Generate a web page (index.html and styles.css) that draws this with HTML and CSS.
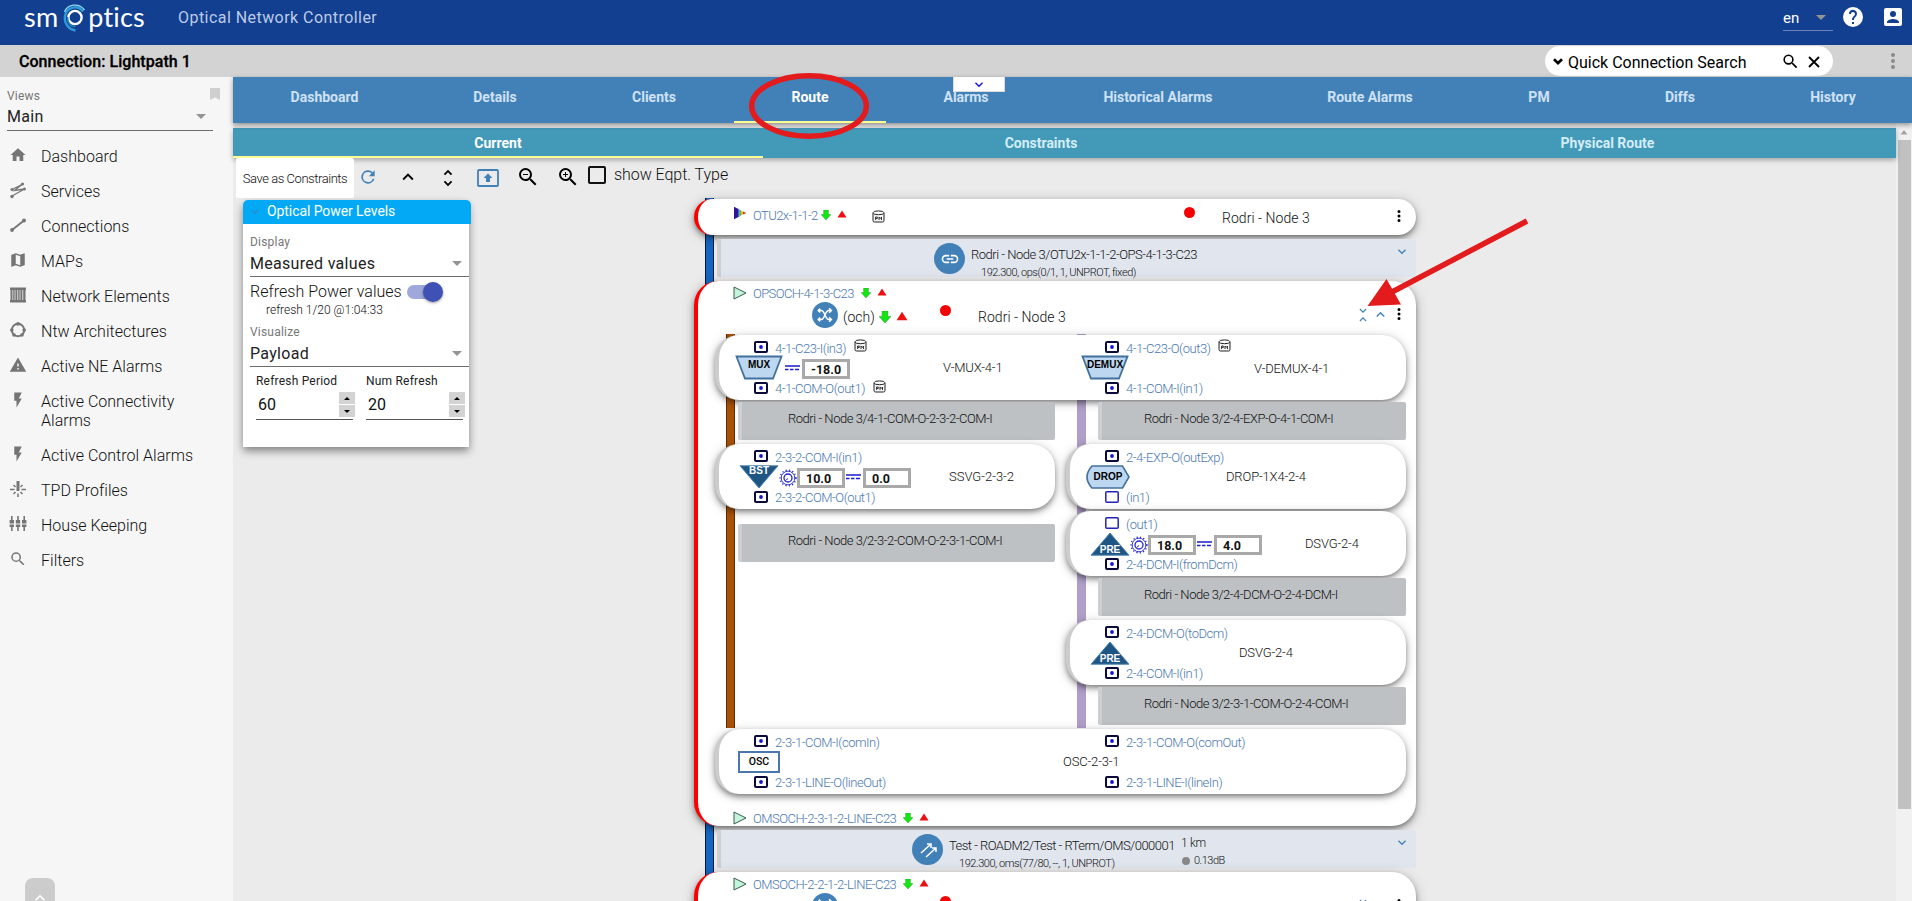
FILE: index.html
```html
<!DOCTYPE html>
<html lang="en">
<head>
<meta charset="utf-8">
<title>Optical Network Controller</title>
<link rel="stylesheet" href="styles.css">
</head>
<body>
<svg class="defs" width="0" height="0">
  <symbol id="more" viewBox="0 0 24 24"><path d="M12 8a2 2 0 1 0 0-4 2 2 0 0 0 0 4zm0 2a2 2 0 1 0 0 4 2 2 0 0 0 0-4zm0 6a2 2 0 1 0 0 4 2 2 0 0 0 0-4z"/></symbol>
  <symbol id="down" viewBox="0 0 24 24"><path d="M7.41 7.84 12 12.42l4.59-4.58L18 9.25l-6 6-6-6z"/></symbol>
  <symbol id="up" viewBox="0 0 24 24"><path d="M7.41 15.41 12 10.83l4.59 4.58L18 14l-6-6-6 6z"/></symbol>
  <symbol id="search" viewBox="0 0 24 24"><path d="M15.5 14h-.79l-.28-.27A6.47 6.47 0 0 0 16 9.5 6.5 6.5 0 1 0 9.5 16c1.61 0 3.09-.59 4.23-1.57l.27.28v.79l5 4.99L20.49 19l-4.99-5zm-6 0a4.5 4.5 0 1 1 0-9 4.5 4.5 0 0 1 0 9z"/></symbol>
  <symbol id="bolt" viewBox="0 0 24 24"><path d="M7 2v11h3v9l7-12h-4l4-8z"/></symbol>
  <symbol id="port" viewBox="0 0 14 12"><rect x="1" y="1" width="12" height="10" rx="1" fill="#fff" stroke="#0a0a3c" stroke-width="2"/><circle cx="7" cy="6" r="1.9" fill="#1414d8"/></symbol>
  <symbol id="port-open" viewBox="0 0 14 12"><rect x=".8" y=".8" width="12.4" height="10.4" rx="1" fill="#fff" stroke="#2323b4" stroke-width="1.5"/></symbol>
  <symbol id="green" viewBox="0 0 10 10"><path d="M2.6 0h4.8v4.5H10L5 10 0 4.500h2.600z" fill="#14e614" stroke="#2b8a2b" stroke-width=".4"/></symbol>
  <symbol id="red" viewBox="0 0 10 8"><path d="M5 .5 9.500 7.500h-9z" fill="#ee1010"/></symbol>
  <symbol id="tri" viewBox="0 0 14 14"><path d="M1 1v12l12-6z" fill="#c2f5dc" stroke="#3b5c4c" stroke-width="1"/></symbol>
  <symbol id="pm" viewBox="0 0 13 13"><path d="M1 3v7.500q0 1.500 1.500 1.500h8q1.500 0 1.500-1.500V3" fill="#f4f4f4" stroke="#222"/><ellipse cx="6.500" cy="2.800" rx="5.500" ry="1.900" fill="#fff" stroke="#222"/><path d="M3.600 10V7h1.700v1.500H3.600M7 10V7l1.200 1.500L9.500 7v3" fill="none" stroke="#222" stroke-width=".9"/></symbol>
  <symbol id="dash" viewBox="0 0 15 6"><path d="M0 1h15M0 4.500h3.500m1.500 0h3.500m1.500 0h4" stroke="#1c1cd0" stroke-width="1.500"/></symbol>
  <symbol id="gear" viewBox="0 0 18 18"><g fill="none" stroke="#2424cf"><circle cx="9" cy="9" r="6.800" stroke-width=".9"/><circle cx="9" cy="9" r="7.900" stroke-width="1.400" stroke-dasharray="1.200 2.250"/><circle cx="9" cy="9" r="4" stroke-width="1.300"/><path d="M6.500 11.500 9 9.500"/></g></symbol>
  <symbol id="mux" viewBox="0 0 48 25"><path d="M1.500 1.500h45l-8.500 22h-28z" fill="#bdd7f0" stroke="#41719c" stroke-width="1.800"/></symbol>
  <symbol id="bst" viewBox="0 0 40 24"><path d="M1 .8h38L20 23z" fill="#1f5583" stroke="#4e86b5"/></symbol>
  <symbol id="pre" viewBox="0 0 40 24"><path d="M20 1 39 23.200H1z" fill="#1f5583" stroke="#4e86b5"/></symbol>
  <symbol id="drop" viewBox="0 0 44 24"><path d="M6 1h30.500L43 12l-6.500 11H6Q-4 12 6 1z" fill="#bdd7f0" stroke="#41719c" stroke-width="1.600"/></symbol>
  <symbol id="shuffle" viewBox="0 0 24 24"><path d="M3 6h4c5 0 5 12 10 12h3M3 18h4c5 0 5-12 10-12h3M17.500 3l3 3-3 3M17.500 15l3 3-3 3M5.500 3.500 3 6l2.500 2.500M5.500 15.500 3 18l2.500 2.500" fill="none" stroke="#fff" stroke-width="2"/></symbol>
</svg>

<header class="topbar">
  <div class="logo"><span>sm</span><svg width="30" height="30" viewBox="0 0 30 30" fill="none"><circle cx="17" cy="14.500" r="6.600" stroke="#fff" stroke-width="2.400"/><path d="M25 8.500C20 1.500 8.500 3.500 7 13c-1 8 4 13.500 10.500 14.500" stroke="#2f9bd6" stroke-width="2.400"/><path d="M26.500 7C21-.5 9.500 1 6.500 9" stroke="#8fd8f2" stroke-width="1.300"/><path d="M9.500 14c0 6 3 9.500 8 9.500" stroke="#1f7fc4" stroke-width="1.600"/></svg><span>ptics</span></div>
  <div class="product">Optical Network Controller</div>
  <div class="lang"><span>en</span><i class="caret"></i></div>
  <svg class="help" width="24" height="24" viewBox="0 0 24 24" fill="#fff"><path d="M12 2a10 10 0 1 0 0 20 10 10 0 0 0 0-20zm1 17h-2v-2h2v2zm2.070-7.750-.9.920C13.450 12.900 13 13.500 13 15h-2v-.5c0-1.100.450-2.100 1.170-2.830l1.240-1.260A2 2 0 1 0 10 9H8a4 4 0 1 1 7.070 2.250z"/></svg>
  <svg width="24" height="24" viewBox="0 0 24 24" fill="#fff"><path d="M3 5v14a2 2 0 0 0 2 2h14a2 2 0 0 0 2-2V5a2 2 0 0 0-2-2H5a2 2 0 0 0-2 2zm12 4a3 3 0 1 1-6 0 3 3 0 0 1 6 0zm-9 8c0-2 4-3.100 6-3.100s6 1.100 6 3.100v1H6z"/></svg>
</header>

<div class="titlebar">
  <h1>Connection: Lightpath 1</h1>
  <div class="quick">
    <svg class="bold" width="16" height="16"><use href="#down"/></svg>
    <span>Quick Connection Search</span>
    <svg class="qs" width="19" height="19"><use href="#search"/></svg>
    <svg width="12" height="12" viewBox="0 0 12 12"><path d="M1 1l10 10M11 1 1 11" stroke="#000" stroke-width="1.800"/></svg>
  </div>
  <svg class="menu" width="24" height="24"><use href="#more"/></svg>
</div>

<div class="shell">
  <nav class="side">
    <div class="views"><span>Views</span><svg width="10" height="12" viewBox="0 0 10 12"><path d="M0 0h10v12L5 9.500 0 12z" fill="#cfcfcf"/></svg></div>
    <div class="select viewsel"><span>Main</span><i class="caret"></i></div>
    <ul>
      <li><svg width="18" height="18" viewBox="0 0 24 24"><path d="M10 20v-6h4v6h5v-8h3L12 3 2 12h3v8z"/></svg>Dashboard</li>
      <li><svg width="18" height="18" viewBox="0 0 18 18"><g fill="none" stroke="#757575" stroke-width="1.300"><path d="M3 8.500 13 3.500M13 3.500 5.500 9.500 15.500 8M15.500 8 3 15"/></g><circle cx="3" cy="8.500" r="1.500"/><circle cx="13.500" cy="3" r="1.600"/><circle cx="15.500" cy="8" r="1.500"/><circle cx="3" cy="15.500" r="1.700"/></svg>Services</li>
      <li><svg width="18" height="18" viewBox="0 0 18 18"><path d="M3 14 15 4.500" stroke="#757575" stroke-width="1.800"/><circle cx="3" cy="14" r="1.900"/><circle cx="15" cy="4.500" r="1.900"/></svg>Connections</li>
      <li><svg width="18" height="18" viewBox="0 0 24 24"><path d="m20.500 3-.16.030L15 5.100 9 3 3.360 4.900A.5.5 0 0 0 3 5.380V20.500c0 .3.220.5.500.5l.16-.030L9 18.900l6 2.100 5.640-1.900a.5.5 0 0 0 .36-.480V3.500a.5.5 0 0 0-.5-.5zM15 19l-6-2.110V5l6 2.110z"/></svg>MAPs</li>
      <li><svg width="18" height="18" viewBox="0 0 18 18"><path d="M1 1.500h16V4H1zM1 14h16v2.500H1zM1.500 4h2v10h-2zM4.200 4h1.500v10H4.200zM6.400 4h2v10h-2zM9.200 4h1.500v10H9.200zM11.400 4h2v10h-2zM14.200 4h2.300v10h-2.300z"/></svg>Network Elements</li>
      <li><svg width="18" height="18" viewBox="0 0 18 18"><circle cx="9" cy="9" r="6.200" fill="none" stroke="#757575" stroke-width="1.900"/><circle cx="9" cy="2.800" r="1.900"/><circle cx="15.200" cy="9" r="1.800"/><circle cx="2.800" cy="9" r="1.800"/><circle cx="5" cy="14" r="1.800"/><circle cx="13" cy="14" r="1.800"/></svg>Ntw Architectures</li>
      <li><svg width="18" height="18" viewBox="0 0 24 24"><path d="M1 21h22L12 2zm12-3h-2v-2h2zm0-4h-2v-4h2z"/></svg>Active NE Alarms</li>
      <li class="two"><svg width="18" height="18"><use href="#bolt"/></svg>Active Connectivity Alarms</li>
      <li><svg width="18" height="18"><use href="#bolt"/></svg>Active Control Alarms</li>
      <li><svg width="18" height="18" viewBox="0 0 18 18"><g fill="none" stroke="#757575" stroke-width="1.500"><path d="M1 9.500h4.500M12.500 9.500H17M9 13.500V17M4.500 5 6.500 7M13.500 5l-2 2M4.500 14l2-2M13.500 14l-2-2"/><path d="M9 1v10" stroke-width="3"/></g></svg>TPD Profiles</li>
      <li><svg width="18" height="18" viewBox="0 0 18 18"><path d="M2 1h1.600v4H5v7H3.600v4H2v-4H.6V5H2zM8.200 1h1.600v4h1.400v7H9.800v4H8.200v-4H6.800V5h1.400zM14.400 1H16v4h1.400v7H16v4h-1.600v-4H13V5h1.400z"/><path d="M0 9h18" stroke="#f6f6f6" stroke-width="1"/></svg>House Keeping</li>
      <li><svg width="18" height="18"><use href="#search"/></svg>Filters</li>
    </ul>
    <div class="totop"><svg width="20" height="20"><use href="#up"/></svg></div>
  </nav>

  <main>
    <div class="tabs">
      <span class="t1">Dashboard</span><span class="t2">Details</span><span class="t3">Clients</span><span class="t4 on">Route</span><span class="t5">Alarms</span><span class="t6">Historical Alarms</span><span class="t7">Route Alarms</span><span class="t8">PM</span><span class="t9">Diffs</span><span class="t10">History</span>
      <div class="pull"><svg width="16" height="16"><use href="#down"/></svg></div>
    </div>
    <div class="pane">
      <div class="content">
        <div class="subtabs"><span class="s1 on">Current</span><span class="s2">Constraints</span><span class="s3">Physical Route</span></div>
        <div class="work">
          <div class="left">
            <div class="tools">
              <button>Save as Constraints</button>
              <svg class="i-ref" width="20" height="20" viewBox="0 0 24 24" fill="#4281b8"><path d="M17.650 6.350A8 8 0 1 0 19.730 14h-2.080A6 6 0 1 1 12 6c1.660 0 3.140.69 4.220 1.780L13 11h7V4z"/></svg>
              <svg class="i-up" width="22" height="22"><use href="#up"/></svg>
              <svg class="i-unf" width="22" height="22" viewBox="0 0 24 24"><path d="M12 5.830 15.170 9l1.410-1.410L12 3 7.410 7.590 8.830 9zm0 12.340L8.830 15l-1.410 1.410L12 21l4.590-4.590L15.170 15z"/></svg>
              <svg class="i-box" width="22" height="18" viewBox="0 0 22 18"><rect x="1" y="1" width="20" height="16" rx="1" fill="none" stroke="#4281b8" stroke-width="1.800"/><path d="M11 4.500 15.500 9H13v4H9V9H6.500z" fill="#4281b8"/></svg>
              <svg class="i-zo" width="24" height="24" viewBox="0 0 24 24"><use href="#search"/><path d="M7 9h5v1H7z"/></svg>
              <svg class="i-zi" width="24" height="24" viewBox="0 0 24 24"><use href="#search"/><path d="M7 9h5v1H7zM9 7h1v5H9z"/></svg>
              <i class="check"></i><span class="eqpt">show Eqpt. Type</span>
            </div>
            <section class="panel">
              <h2><svg width="16" height="16"><use href="#down"/></svg>Optical Power Levels</h2>
              <div class="pbody">
                <label>Display</label>
                <div class="select"><span>Measured values</span><i class="caret"></i></div>
                <div class="toggle"><span>Refresh Power values</span><i class="track"><b></b></i></div>
                <div class="note">refresh 1/20 @1:04:33</div>
                <label class="vis">Visualize</label>
                <div class="select"><span>Payload</span><i class="caret"></i></div>
                <div class="nums">
                  <div><label>Refresh Period</label><div class="num"><span>60</span><i class="spin"><b></b><b class="dn"></b></i></div></div>
                  <div><label>Num Refresh</label><div class="num"><span>20</span><i class="spin"><b></b><b class="dn"></b></i></div></div>
                </div>
              </div>
            </section>
          </div>

          <div class="route">
            <div class="node short">
              <div class="tp first"><svg width="14" height="14" viewBox="0 0 14 14"><path d="M1 .8v12.400l4-2V2.800z" fill="#33159c"/><path d="M5 2.800v8.400l1.500-.8V3.600z" fill="#2a78d0"/><path d="M6.500 3.600v6.800L8 9.600V4.400z" fill="#58b848"/><path d="M8 4.400v5.200l2-1V5.400z" fill="#e6c229"/><path d="M10 5.400v3.200L13.300 7z" fill="#d8321e"/></svg><span class="otu">OTU2x-1-1-2</span><svg width="10" height="10"><use href="#green"/></svg><svg class="r" width="10" height="8"><use href="#red"/></svg><svg class="pmi" width="13" height="13"><use href="#pm"/></svg></div>
              <i class="dot"></i><span class="nname">Rodri - Node 3</span>
              <svg class="mv" width="18" height="18"><use href="#more"/></svg>
            </div>
            <div class="link l1">
              <i class="round"><svg width="20" height="20" viewBox="0 0 24 24" fill="#fff"><path d="M3.900 12A3.100 3.100 0 0 1 7 8.900h4V7H7a5 5 0 0 0 0 10h4v-1.900H7A3.100 3.100 0 0 1 3.900 12zM8 13h8v-2H8zm9-6h-4v1.900h4a3.100 3.100 0 0 1 0 6.200h-4V17h4a5 5 0 0 0 0-10z"/></svg></i>
              <div class="ltext"><p>Rodri - Node 3/OTU2x-1-1-2-OPS-4-1-3-C23</p><small>192.300, ops(0/1, 1, UNPROT, fixed)</small></div>
              <svg class="ch" width="16" height="16"><use href="#down"/></svg>
            </div>

            <div class="node big">
              <div class="tp"><svg width="14" height="14"><use href="#tri"/></svg><span class="och">OPSOCH-4-1-3-C23</span><svg width="10" height="10"><use href="#green"/></svg><svg class="r" width="10" height="8"><use href="#red"/></svg></div>
              <div class="nhead"><i class="round sm"><svg width="18" height="18"><use href="#shuffle"/></svg></i><span class="ochl">(och)</span><svg width="12" height="12"><use href="#green"/></svg><svg class="r2" width="12" height="10"><use href="#red"/></svg><i class="dot"></i><span class="nname">Rodri - Node 3</span>
                <svg class="fold" width="14" height="16" viewBox="0 0 24 24"><path d="M7.410 1 6 2.400 12 8.400 18 2.400 16.600 1 12 5.600zM16.600 23 18 21.600l-6-6-6 6L7.400 23 12 18.400z"/></svg>
                <svg class="fu" width="17" height="17"><use href="#up"/></svg>
                <svg class="mv" width="18" height="18"><use href="#more"/></svg></div>

              <div class="grid">
                <div class="dev wide">
                  <div class="half">
                    <div class="port"><svg width="14" height="12"><use href="#port"/></svg><span>4-1-C23-I(in3)</span><svg width="13" height="13"><use href="#pm"/></svg></div>
                    <div class="mid"><i class="sym"><svg width="48" height="25"><use href="#mux"/></svg><b>MUX</b></i><svg class="da" width="15" height="6"><use href="#dash"/></svg><span class="val">-18.0</span><span class="name n-mux">V-MUX-4-1</span></div>
                    <div class="port"><svg width="14" height="12"><use href="#port"/></svg><span>4-1-COM-O(out1)</span><svg width="13" height="13"><use href="#pm"/></svg></div>
                  </div>
                  <div class="half">
                    <div class="port"><svg width="14" height="12"><use href="#port"/></svg><span>4-1-C23-O(out3)</span><svg width="13" height="13"><use href="#pm"/></svg></div>
                    <div class="mid de"><i class="sym"><svg width="48" height="25"><use href="#mux"/></svg><b>DEMUX</b></i><span class="name n-demux">V-DEMUX-4-1</span></div>
                    <div class="port"><svg width="14" height="12"><use href="#port"/></svg><span>4-1-COM-I(in1)</span></div>
                  </div>
                </div>

                <div class="col">
                  <div class="conn">Rodri - Node 3/4-1-COM-O-2-3-2-COM-I</div>
                  <div class="dev"><div class="half">
                    <div class="port"><svg width="14" height="12"><use href="#port"/></svg><span>2-3-2-COM-I(in1)</span></div>
                    <div class="mid amp"><i class="sym up light"><svg width="40" height="24"><use href="#bst"/></svg><b>BST</b></i><svg class="ge" width="18" height="18"><use href="#gear"/></svg><span class="val">10.0</span><svg class="da" width="15" height="6"><use href="#dash"/></svg><span class="val">0.0</span><span class="name n-ssvg">SSVG-2-3-2</span></div>
                    <div class="port"><svg width="14" height="12"><use href="#port"/></svg><span>2-3-2-COM-O(out1)</span></div>
                  </div></div>
                  <div class="conn later">Rodri - Node 3/2-3-2-COM-O-2-3-1-COM-I</div>
                </div>

                <div class="col right">
                  <div class="conn">Rodri - Node 3/2-4-EXP-O-4-1-COM-I</div>
                  <div class="dev"><div class="half">
                    <div class="port"><svg width="14" height="12"><use href="#port"/></svg><span>2-4-EXP-O(outExp)</span></div>
                    <div class="mid"><i class="sym dr"><svg width="44" height="24"><use href="#drop"/></svg><b>DROP</b></i><span class="name n-drop">DROP-1X4-2-4</span></div>
                    <div class="port"><svg width="14" height="12"><use href="#port-open"/></svg><span>(in1)</span></div>
                  </div></div>
                  <div class="dev near"><div class="half">
                    <div class="port"><svg width="14" height="12"><use href="#port-open"/></svg><span>(out1)</span></div>
                    <div class="mid amp"><i class="sym low light"><svg width="40" height="24"><use href="#pre"/></svg><b>PRE</b></i><svg class="ge" width="18" height="18"><use href="#gear"/></svg><span class="val">18.0</span><svg class="da" width="15" height="6"><use href="#dash"/></svg><span class="val">4.0</span><span class="name n-dsvg">DSVG-2-4</span></div>
                    <div class="port"><svg width="14" height="12"><use href="#port"/></svg><span>2-4-DCM-I(fromDcm)</span></div>
                  </div></div>
                  <div class="conn">Rodri - Node 3/2-4-DCM-O-2-4-DCM-I</div>
                  <div class="dev"><div class="half">
                    <div class="port"><svg width="14" height="12"><use href="#port"/></svg><span>2-4-DCM-O(toDcm)</span></div>
                    <div class="mid amp"><i class="sym low light"><svg width="40" height="24"><use href="#pre"/></svg><b>PRE</b></i><span class="name n-pre">DSVG-2-4</span></div>
                    <div class="port"><svg width="14" height="12"><use href="#port"/></svg><span>2-4-COM-I(in1)</span></div>
                  </div></div>
                  <div class="conn">Rodri - Node 3/2-3-1-COM-O-2-4-COM-I</div>
                </div>

                <div class="dev wide last">
                  <div class="half">
                    <div class="port"><svg width="14" height="12"><use href="#port"/></svg><span>2-3-1-COM-I(comIn)</span></div>
                    <div class="mid"><i class="osc">OSC</i><span class="name n-osc">OSC-2-3-1</span></div>
                    <div class="port"><svg width="14" height="12"><use href="#port"/></svg><span>2-3-1-LINE-O(lineOut)</span></div>
                  </div>
                  <div class="half">
                    <div class="port"><svg width="14" height="12"><use href="#port"/></svg><span>2-3-1-COM-O(comOut)</span></div>
                    <div class="mid"></div>
                    <div class="port"><svg width="14" height="12"><use href="#port"/></svg><span>2-3-1-LINE-I(lineIn)</span></div>
                  </div>
                </div>
              </div>
              <div class="tp foot"><svg width="14" height="14"><use href="#tri"/></svg><span class="oms">OMSOCH-2-3-1-2-LINE-C23</span><svg width="10" height="10"><use href="#green"/></svg><svg class="r" width="10" height="8"><use href="#red"/></svg></div>
            </div>

            <div class="link l2">
              <i class="round"><svg width="20" height="20" viewBox="0 0 20 20" fill="none" stroke="#fff" stroke-width="1.500"><path d="M3 13 13 4M9 4h4v4M8 17 18 8M14 8h4v4"/></svg></i>
              <div class="ltext"><p>Test - ROADM2/Test - RTerm/OMS/000001</p><small>192.300, oms(77/80, --, 1, UNPROT)</small></div>
              <div class="loss"><span>1 km</span><span class="db"><i></i>0.13dB</span></div>
              <svg class="ch" width="16" height="16"><use href="#down"/></svg>
            </div>

            <div class="node big">
              <div class="tp"><svg width="14" height="14"><use href="#tri"/></svg><span class="oms">OMSOCH-2-2-1-2-LINE-C23</span><svg width="10" height="10"><use href="#green"/></svg><svg class="r" width="10" height="8"><use href="#red"/></svg></div>
              <div class="nhead"><i class="round sm"><svg width="18" height="18"><use href="#shuffle"/></svg></i><span class="ochl"></span><svg width="12" height="12"><use href="#green"/></svg><svg class="r2" width="12" height="10"><use href="#red"/></svg><i class="dot"></i><span class="nname"></span>
                <svg class="fold" width="14" height="16" viewBox="0 0 24 24"><path d="M7.410 1 6 2.400 12 8.400 18 2.400 16.600 1 12 5.600zM16.600 23 18 21.600l-6-6-6 6L7.400 23 12 18.400z"/></svg>
                <svg class="fu" width="17" height="17"><use href="#up"/></svg>
                <svg class="mv" width="18" height="18"><use href="#more"/></svg></div>
            </div>
          </div>
        </div>
      </div>
      <div class="scroll"><svg width="16" height="17" viewBox="0 0 16 17"><path d="M4.500 11.500h7L8 7z" fill="#a3a3a3"/></svg><i></i></div>
    </div>
  </main>
</div>

<svg class="marks" width="1912" height="901" viewBox="0 0 1912 901">
  <ellipse cx="809" cy="106" rx="57.300" ry="30.200" fill="none" stroke="#e31b1d" stroke-width="5.500"/>
  <path d="M1527 221 1392 292" stroke="#e31b1d" stroke-width="5.500"/>
  <path d="M1367.500 306 1386.500 279 1401 304.500z" fill="#e31b1d"/>
</svg>
</body>
</html>
```

FILE: styles.css
```css
* { box-sizing: border-box; }
html, body { margin: 0; height: 901px; overflow: hidden; }
body { font-family: Roboto, "Liberation Sans", sans-serif; font-size: 16px; font-weight: 300; color: #111; background: #ebebeb; display: flex; flex-direction: column; }
h1, h2, p, ul { margin: 0; padding: 0; font-weight: inherit; }
i, small { font-style: normal; }
svg { flex: none; display: block; }
span, p, small, label, li { white-space: nowrap; }
.defs { position: absolute; }

.topbar { flex: none; height: 45px; background: #123f90; display: flex; align-items: flex-start; padding: 5px 7px 0 24px; }
.logo { display: flex; width: 154px; height: 28px; color: #fff; font: 400 27px/24px Lato, sans-serif; letter-spacing: .2px; }
.logo svg { margin: -2px 0 0 0; }
.product { flex: 1; font-weight: 400; color: #bccbe8; line-height: 26px; letter-spacing: .45px; }
.lang { width: 50px; height: 26px; border-bottom: 1px solid #7084b8; display: flex; align-items: center; justify-content: space-between; padding-right: 7px; color: #fff; font-weight: 400; font-size: 15px; margin-right: 8px; }
.help { margin-right: 16px; }
.caret { border: 5px solid transparent; border-top-color: #949494; border-bottom: 0; }

.titlebar { flex: none; height: 32px; background: #d3d3d3; display: flex; align-items: center; padding: 0 7px 0 19px; }
.titlebar h1 { flex: 1; font-size: 16px; font-weight: 500; color: #000; line-height: 32px; padding-top: 1px; -webkit-text-stroke: .3px #000; letter-spacing: .05px; }
.quick { width: 288px; height: 30px; border-radius: 15px; background: #fff; display: flex; align-items: center; padding: 1px 13px 0 5px; color: #000; font-weight: 400; }
.quick span { width: 214px; margin-left: 2px; padding-top: 1px; }
.quick .qs { margin-right: 8px; }
.bold { stroke: #000; stroke-width: 2; }
.menu { margin-left: 48px; fill: #8a8a8a; }

.shell { flex: 1; display: flex; min-height: 0; }
.side { width: 233px; background: #f6f6f6; padding-left: 7px; position: relative; }
.views { display: flex; justify-content: space-between; padding: 11px 13px 0 0; height: 31px; font-size: 12px; line-height: 17px; color: #777; font-weight: 400; letter-spacing: .2px; }
.select { display: flex; align-items: center; justify-content: space-between; height: 26px; border-bottom: 1px solid #6c6c6c; padding-right: 7px; letter-spacing: .3px; color: #222; font-weight: 400; }
.viewsel { width: 206px; height: 23px; padding-bottom: 5px; }
.side ul { list-style: none; padding-top: 8px; }
.side li { height: 35px; line-height: 19px; padding: 8px 20px 8px 34px; letter-spacing: .02px; position: relative; }
.side li svg { position: absolute; left: 2px; top: 7px; fill: #757575; }
.side .two { height: 54px; white-space: normal; }
.totop { position: absolute; left: 25px; bottom: -7px; width: 30px; height: 30px; border-radius: 8px; background: #ccc; display: flex; justify-content: center; padding-top: 10px; fill: #fff; }

main { width: 1679px; display: flex; flex-direction: column; }
.tabs { flex: none; height: 46px; background: #4281b8; display: flex; position: relative; z-index: 2; box-shadow: 0 2px 5px rgba(0,0,0,.4); }
.tabs span, .subtabs span { text-align: center; font-size: 14px; font-weight: 700; color: #cfe2f4; }
.tabs span { line-height: 40px; height: 46px; }
.tabs .on, .subtabs .on { color: #fff; border-bottom: 2px solid #fdfd96; }
.t1 { width: 183px; } .t2 { width: 158px; } .t3 { width: 160px; } .t4 { width: 152px; } .t5 { width: 160px; }
.t6 { width: 224px; } .t7 { width: 200px; } .t8 { width: 138px; } .t9 { width: 144px; } .t10 { width: 160px; padding-left: 2px; }
.pull { position: absolute; left: 720px; top: 0; width: 52px; height: 15px; background: #fff; display: flex; justify-content: center; border: 1px solid #ddd; border-top: 0; fill: #1414c8; }
.pane { flex: 1; display: flex; min-height: 0; background: #ebebeb; }
.content { width: 1663px; padding-top: 5px; }
.subtabs { height: 30px; display: flex; background: #4399b8; box-shadow: 0 2px 5px rgba(0,0,0,.3); position: relative; }
.subtabs span { line-height: 31px; color: #d3edf7; }
.s1 { width: 530px; } .s2 { width: 556px; } .s3 { width: 577px; }
.scroll { width: 16px; background: #f1f1f1; }
.scroll i { display: block; width: 13px; height: 669px; margin-left: 2px; background: #c1c1c1; }

.work { display: flex; height: 743px; overflow: hidden; }
.left { width: 461px; padding-left: 3px; position: relative; }
.tools { display: flex; align-items: flex-start; height: 42px; width: 520px; position: relative; }
.tools button { width: 118px; height: 40px; border: 0; border-radius: 2px; background: #fff; padding: 0; font: 300 13px Roboto, sans-serif; color: #111; letter-spacing: -.45px; white-space: nowrap; }
.i-ref { margin: 9px 0 0 4px; } .i-up { margin: 8px 0 0 19px; } .i-unf { margin: 9px 0 0 18px; } .i-box { margin: 11px 0 0 18px; }
.i-zo { margin: 7px 0 0 17px; } .i-zi { margin: 7px 0 0 16px; }
.check { width: 18px; height: 18px; border: 2px solid #111; border-radius: 2px; margin: 8px 8px 0 8px; flex: none; }
.eqpt { line-height: 34px; letter-spacing: -.05px; }

.panel { margin-left: 7px; width: 226px; height: 247px; background: #fff; box-shadow: 0 4px 9px rgba(0,0,0,.45); border-radius: 6px 6px 0 0; }
.panel h2 { width: 228px; height: 24px; background: #03a9f4; border-radius: 5px 5px 0 0; color: #fff; font-size: 14px; font-weight: 400; line-height: 23px; display: flex; letter-spacing: -.08px; }
.panel h2 svg { margin: 4px 4px 0; fill: #258fc9; }
.pbody { padding: 9px 0 0 7px; }
.pbody label { display: block; font-size: 12px; line-height: 18px; color: #777; font-weight: 400; letter-spacing: .2px; }
.pbody .select { width: 219px; }
.toggle { display: flex; align-items: center; height: 28px; letter-spacing: .02px; }
.track { width: 34px; height: 14px; border-radius: 7px; background: #9fa8da; margin-left: 5px; display: flex; align-items: center; justify-content: flex-end; margin-top: 2px; }
.track b { width: 20px; height: 20px; flex: none; border-radius: 50%; background: #3f51b5; margin-right: -2px; box-shadow: 0 1px 3px rgba(0,0,0,.4); }
.note { font-size: 12px; line-height: 10px; padding-left: 16px; letter-spacing: 0; }
.vis { padding-top: 8px; }
.nums { display: flex; gap: 13px; padding: 5px 0 0 6px; }
.nums label { color: #222; }
.num { display: flex; width: 97px; height: 30px; border-bottom: 1px solid #555; padding: 2px 0 0 2px; font-weight: 400; line-height: 26px; justify-content: space-between; color: #111; }
.spin { width: 16px; height: 25px; display: flex; flex-direction: column; gap: 1px; margin-right: -2px; }
.spin b { flex: 1; background: #d3d3d3; display: flex; justify-content: center; align-items: center; }
.spin b::before { content: ""; border: 3px solid transparent; border-bottom-color: #000; border-top: 0; }
.spin .dn::before { border: 3px solid transparent; border-top-color: #000; border-bottom: 0; }

.route { width: 722px; padding-top: 41px; background: linear-gradient(90deg, #06173a 1px, #1566c0 1px, #1566c0 8px, #06173a 8px) 11px 40px / 9px 800px no-repeat; }
.node { border-left: 4px solid #f00; background: #fff; position: relative; box-shadow: 0 3px 6px -1px rgba(0,0,0,.55), 0 2px 14px rgba(0,0,0,.18); }
.short { height: 36px; border-radius: 20px; display: flex; align-items: flex-start; }
.big { height: 545px; border-radius: 24px; padding-top: 1px; }
.tp { display: flex; align-items: center; height: 22px; padding-left: 35px; color: #4a78b0; font-size: 13px; line-height: 22px; letter-spacing: -.6px; }
.tp .r { margin: -3px 0 0 6px; }
.tp span { margin-left: 6px; padding-top: 1px; flex: none; }
.first { width: 486px; height: 32px; flex: none; }
.first > svg:first-child { margin-top: -4px; }
.otu { width: 68px; }
.och { width: 108px; } .oms { width: 150px; letter-spacing: -.52px; }
.pmi { margin: 2px 0 0 25px; }
.dot { width: 11px; height: 11px; border-radius: 50%; background: #f40000; flex: none; }
.short .dot { margin: 8px 0 0; }
.nname { font-size: 14px; width: 87px; letter-spacing: .05px; }
.short .nname { margin: 10px 81px 0 27px; line-height: 18px; }
.short .mv { margin-top: 8px; }
.nhead { display: flex; align-items: center; height: 24px; padding: 0 0 2px 114px; font-size: 14px; margin-top: -1px; }
.nhead .dot { margin: -7px 0 0 32px; }
.nhead .nname { margin: 5px 291px 0 27px; }
.ochl { width: 36px; margin: 5px 0 0 5px; }
.nhead > .ochl + svg { margin-top: 5px; }
.r2 { margin: 3px 0 0 5px; }
.fold { fill: #4281b8; margin-top: 2px; } .fu { fill: #4281b8; margin: 1px 1px 0 2px; }
.round { width: 31px; height: 31px; border-radius: 50%; background: #4281b8; display: flex; align-items: center; justify-content: center; flex: none; }
.round.sm { width: 26px; height: 26px; margin-top: 1px; }
.link { position: relative; margin: 4px 0 4px 23px; height: 38px; background: #e1e6ee; border-left: 4px solid #cfcfcf; border-radius: 2px; display: flex; }
.l1 { padding-left: 213px; } .l2 { padding-left: 191px; }
.link .round { margin-top: 4px; }
.ltext { width: 232px; margin-left: 6px; letter-spacing: -.48px; }
.l2 .ltext { letter-spacing: -.53px; }
.ltext p { font-size: 13px; line-height: 16px; padding-top: 8px; }
.ltext small { display: block; font-size: 11px; line-height: 14px; padding: 3px 0 0 10px; letter-spacing: -.45px; }
.link .ch { fill: #4281b8; margin: 5px 6px 0 auto; }
.loss { display: flex; flex-direction: column; font-size: 12px; line-height: 18px; padding-top: 4px; letter-spacing: -.3px; }
.db { font-size: 11px; display: flex; align-items: center; gap: 4px; padding-left: 1px; letter-spacing: -.5px; }
.db i { width: 8px; height: 8px; border-radius: 50%; background: #888; }

.grid { margin: 7px 10px 0 17px; padding-top: 1px; display: grid; grid-template-columns: 340px 340px; column-gap: 11px; align-items: start;
  background: linear-gradient(90deg, #5f2d06 1px, #a85208 1px, #a85208 8px, #5f2d06 8px) 11px 0 / 9px 394px no-repeat, linear-gradient(#b09fc8, #b09fc8) 362px 0 / 9px 394px no-repeat; }
.dev { height: 65px; background: #fff; border-left: 4px solid #ccc; border-radius: 24px; display: flex; box-shadow: 0 3px 6px -1px rgba(0,0,0,.5), 0 2px 12px rgba(0,0,0,.18); position: relative; }
.wide { grid-column: 1 / 3; width: 691px; }
.half { width: 351px; flex: none; display: grid; grid-template-rows: 24px 17px 23px; }
.port { display: flex; align-items: center; padding-left: 35px; font-size: 13px; color: #4a78b0; letter-spacing: -.47px; }
.port span { margin: 2px 8px 0 7px; }
.port svg:nth-child(3) { margin-top: -3px; }
.mid { display: flex; align-items: center; padding-left: 16px; font-size: 13px; height: 17px; }
.amp { padding-left: 20px; }
.de { padding-left: 11px; }
.sym { display: grid; place-items: center; flex: none; }
.sym > * { grid-area: 1 / 1; }
.sym b { font: 700 10px/12px "Liberation Sans", sans-serif; color: #000; margin-bottom: 5px; z-index: 1; }
.sym.up b { color: #fff; margin-bottom: 11px; }
.sym.low b { color: #fff; margin: 12px 0 0; }
.sym.dr b { margin-bottom: 0; }
.da { margin: 0 2px; }
.ge { margin: 3px 0 0; flex: none; }
.amp .da { margin: 0 2px 0 1px; }
.val { width: 48px; height: 20px; flex: none; border: 3px solid #a9a9a9; margin-top: 3px; font-weight: 700; font-size: 12.500px; line-height: 15px; padding-left: 6px; color: #111; }
.name { line-height: 16px; letter-spacing: -.15px; }
.n-mux { margin-left: 93px; } .n-demux { margin: 2px 0 0 125px; } .n-ssvg { margin-left: 38px; letter-spacing: 0; }
.n-drop { margin-left: 96px; } .n-dsvg { margin-left: 43px; } .n-pre { margin-left: 109px; } .n-osc { margin-left: 283px; }
.osc { width: 42px; height: 22px; border: 2px solid #4a78ac; margin-left: 3px; background: #fff; font: 500 10.500px/18px Roboto, sans-serif; text-align: center; flex: none; color: #000; }
.conn { height: 38px; margin: 2px 0 4px 23px; background: #bdc1c4; border-left: 4px solid #cdd0d2; border-radius: 2px; font-size: 13px; line-height: 34px; padding-left: 46px; position: relative; letter-spacing: -.47px; }
.right .conn { margin-left: 32px; padding-left: 42px; }
.later { margin-top: 15px; }
.near { margin-top: 2px; }
.last { margin-top: 0; }
.foot { height: 22px; margin-top: 13px; }

.marks { position: absolute; left: 0; top: 0; z-index: 9; pointer-events: none; }
```
